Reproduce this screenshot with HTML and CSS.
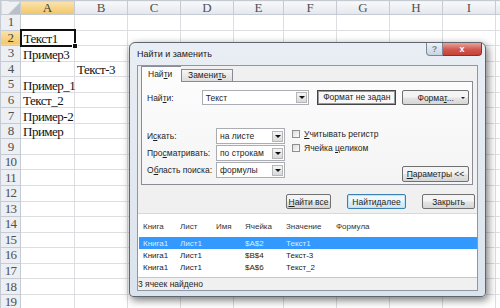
FILE: index.html
```html
<!DOCTYPE html>
<html lang="ru">
<head>
  <meta charset="UTF-8">
  <title>Найти и заменить</title>
  <link rel="stylesheet" href="styles.css">
</head>
<body>
  <!-- лист Excel -->
  <table class="sheet">
    <colgroup>
      <col class="rn"><col class="wa"><col class="w"><col class="w"><col class="w"><col class="we">
      <col class="w"><col class="w"><col class="w"><col class="w"><col class="wj">
    </colgroup>
    <tr class="hdr"><th class="corner"></th><th class="sel">A</th><th>B</th><th>C</th><th>D</th><th>E</th><th>F</th><th>G</th><th>H</th><th>I</th><th></th></tr>
    <tr><th>1</th><td></td><td></td><td></td><td></td><td></td><td></td><td></td><td></td><td></td><td></td></tr>
    <tr><th class="sel">2</th><td class="active">Текст1</td><td></td><td></td><td></td><td></td><td></td><td></td><td></td><td></td><td></td></tr>
    <tr><th>3</th><td>Пример3</td><td></td><td></td><td></td><td></td><td></td><td></td><td></td><td></td><td></td></tr>
    <tr><th>4</th><td></td><td>Текст-3</td><td></td><td></td><td></td><td></td><td></td><td></td><td></td><td></td></tr>
    <tr><th>5</th><td>Пример_1</td><td></td><td></td><td></td><td></td><td></td><td></td><td></td><td></td><td></td></tr>
    <tr><th>6</th><td>Текст_2</td><td></td><td></td><td></td><td></td><td></td><td></td><td></td><td></td><td></td></tr>
    <tr><th>7</th><td>Пример-2</td><td></td><td></td><td></td><td></td><td></td><td></td><td></td><td></td><td></td></tr>
    <tr><th>8</th><td>Пример</td><td></td><td></td><td></td><td></td><td></td><td></td><td></td><td></td><td></td></tr>
    <tr><th>9</th><td></td><td></td><td></td><td></td><td></td><td></td><td></td><td></td><td></td><td></td></tr>
    <tr><th>10</th><td></td><td></td><td></td><td></td><td></td><td></td><td></td><td></td><td></td><td></td></tr>
    <tr><th>11</th><td></td><td></td><td></td><td></td><td></td><td></td><td></td><td></td><td></td><td></td></tr>
    <tr><th>12</th><td></td><td></td><td></td><td></td><td></td><td></td><td></td><td></td><td></td><td></td></tr>
    <tr><th>13</th><td></td><td></td><td></td><td></td><td></td><td></td><td></td><td></td><td></td><td></td></tr>
    <tr><th>14</th><td></td><td></td><td></td><td></td><td></td><td></td><td></td><td></td><td></td><td></td></tr>
    <tr><th>15</th><td></td><td></td><td></td><td></td><td></td><td></td><td></td><td></td><td></td><td></td></tr>
    <tr><th>16</th><td></td><td></td><td></td><td></td><td></td><td></td><td></td><td></td><td></td><td></td></tr>
    <tr><th>17</th><td></td><td></td><td></td><td></td><td></td><td></td><td></td><td></td><td></td><td></td></tr>
    <tr><th>18</th><td></td><td></td><td></td><td></td><td></td><td></td><td></td><td></td><td></td><td></td></tr>
    <tr><th>19</th><td></td><td></td><td></td><td></td><td></td><td></td><td></td><td></td><td></td><td></td></tr>
  </table>

  <!-- окно поиска поверх листа -->
  <div class="dialog">
    <div class="titlebar">
      <span class="title">Найти и заменить</span>
      <div class="caption-btns">
        <span class="cap-help">?</span>
        <span class="cap-close">x</span>
      </div>
    </div>

    <div class="client">
      <div class="tabs">
        <span class="tab active">Най<u>т</u>и</span>
        <span class="tab">Замени<u>т</u>ь</span>
      </div>

      <div class="panel">
        <div class="find-row">
          <span class="lbl">Най<u>т</u>и:</span>
          <div class="combo find-combo"><span class="val">Текст</span><i class="drop"></i></div>
          <div class="fmt-box">Формат не задан</div>
          <div class="btn fmt-btn"><span>Форма<u>т</u>...</span><i class="mini-arrow"></i></div>
        </div>

        <div class="opts">
          <div class="opt-grid">
            <span class="lbl">И<u>с</u>кать:</span>
            <div class="combo"><span class="val">на листе</span><i class="drop"></i></div>
            <span class="lbl">Про<u>с</u>матривать:</span>
            <div class="combo"><span class="val">по строкам</span><i class="drop"></i></div>
            <span class="lbl">О<u>б</u>ласть поиска:</span>
            <div class="combo"><span class="val">формулы</span><i class="drop"></i></div>
          </div>
          <div class="checks">
            <div class="check"><i class="box"></i><span><u>У</u>читывать регистр</span></div>
            <div class="check"><i class="box"></i><span>Ячейка <u>ц</u>еликом</span></div>
          </div>
          <div class="btn params-btn"><u>П</u>араметры &lt;&lt;</div>
        </div>
      </div>

      <div class="actions">
        <div class="btn find-all"><u>Н</u>айти все</div>
        <div class="btn find-next focused">Найти <u>д</u>алее</div>
        <div class="btn close-btn">Закрыть</div>
      </div>

      <div class="results">
        <div class="res-row res-head">
          <span>Книга</span><span>Лист</span><span>Имя</span><span>Ячейка</span><span>Значение</span><span>Формула</span>
        </div>
        <div class="res-row picked">
          <span>Книга1</span><span>Лист1</span><span></span><span>$A$2</span><span>Текст1</span><span></span>
        </div>
        <div class="res-row">
          <span>Книга1</span><span>Лист1</span><span></span><span>$B$4</span><span>Текст-3</span><span></span>
        </div>
        <div class="res-row">
          <span>Книга1</span><span>Лист1</span><span></span><span>$A$6</span><span>Текст_2</span><span></span>
        </div>
      </div>

      <div class="status">3 ячеек найдено</div>
    </div>
  </div>
</body>
</html>
```

FILE: styles.css
```css
body {
  margin: 0;
  width: 500px;
  height: 308px;
  overflow: hidden;
  position: relative;
  background: #fff;
  font-family: 'Liberation Serif', serif;
}

/* ---------- лист ---------- */

.sheet {
  border-collapse: collapse;
  table-layout: fixed;
  width: 522px;
}

.sheet col.rn { width: 20px; }
.sheet col.wa { width: 54px; }
.sheet col.w { width: 53px; }
.sheet col.we { width: 50px; }
.sheet col.wj { width: 27px; }

.sheet tr { height: 15.55px; }
.sheet tr.hdr { height: 14px; }

.sheet td {
  border: 1px solid #dcdee2;
  padding: 0 2px;
  font-size: 13px;
  letter-spacing: -0.5px;
  line-height: 13px;
  color: #111;
  white-space: nowrap;
  overflow: visible;
  vertical-align: bottom;
}

.sheet th {
  border: 1px solid #c6cbd3;
  padding: 0;
  font-weight: normal;
  font-size: 13px;
  line-height: 12px;
  color: #505050;
  background: linear-gradient(#f8f9fb, #e3e7ec);
  text-align: center;
  overflow: hidden;
}

.sheet tr:not(.hdr) th {
  background: #eceff3;
  letter-spacing: -0.8px;
}

.sheet th.sel,
.sheet tr:not(.hdr) th.sel {
  background: linear-gradient(#fbe3ad, #f2c766);
  color: #3c3c3c;
}

.sheet th.corner {
  background: linear-gradient(135deg, #eef0f3 62%, #b9c0ca 62%);
}

.sheet td.active {
  position: relative;
  border: 2px solid #111;
}

.sheet td.active::after {
  content: "";
  position: absolute;
  right: -4px;
  bottom: -4px;
  width: 4px;
  height: 4px;
  background: #111;
  border: 1px solid #fff;
}

/* ---------- окно ---------- */

.dialog {
  position: absolute;
  left: 129px;
  top: 42px;
  width: 357px;
  height: 255px;
  box-sizing: border-box;
  display: flex;
  flex-direction: column;
  padding: 0 7px 5px;
  border: 1px solid #5f6670;
  border-radius: 6px 6px 4px 4px;
  background: linear-gradient(#e9eef4, #dbe3ec);
  box-shadow: 2px 3px 8px rgba(0, 0, 0, 0.55);
  font-family: 'Liberation Sans', sans-serif;
  font-size: 8.5px;
  color: #1e1e1e;
}

.titlebar {
  height: 24px;
  display: flex;
  align-items: flex-start;
}

.title {
  margin-top: 4px;
  font-size: 9px;
  line-height: 14px;
  color: #1a1a1a;
}

.caption-btns {
  margin-left: auto;
  margin-right: -4px;
  display: flex;
}

.cap-help,
.cap-close {
  height: 13px;
  display: flex;
  align-items: center;
  justify-content: center;
  border: 1px solid #7d8794;
  border-top: none;
  box-sizing: border-box;
  font-size: 9px;
  font-weight: bold;
}

.cap-help {
  width: 17px;
  border-radius: 0 0 0 4px;
  background: linear-gradient(#edf1f6, #c9d4e1);
  color: #7b8795;
}

.cap-close {
  width: 39px;
  border-left: none;
  border-color: #8c2f28;
  border-radius: 0 0 4px 0;
  background: linear-gradient(#e6a59c, #d1574c 55%, #c54237);
  color: #fff;
}

.client {
  flex: 1;
  display: flex;
  flex-direction: column;
  background: #f0f0f0;
  border: 1px solid #8e98a4;
}

/* вкладки */

.tabs {
  height: 15px;
  margin-left: 3px;
  display: flex;
  align-items: flex-end;
  position: relative;
  z-index: 1;
}

.tab {
  height: 12px;
  padding: 0 6px;
  box-sizing: border-box;
  border: 1px solid #898c95;
  border-bottom: none;
  background: linear-gradient(#f6f6f6, #dedede);
  line-height: 11px;
}

.tab.active {
  height: 16px;
  width: 40px;
  margin-bottom: -1px;
  background: #fcfcfc;
  border-right: none;
  line-height: 15px;
}

.panel {
  height: 104px;
  margin: 0 4px 0 3px;
  box-sizing: border-box;
  padding: 8px 3px 4px 5px;
  border: 1px solid #898c95;
  background: linear-gradient(#fcfcfc, #f4f4f4);
  display: flex;
  flex-direction: column;
}

.find-row {
  height: 15px;
  display: flex;
  align-items: center;
}

.find-row .lbl { width: 55px; }

.combo {
  height: 15px;
  box-sizing: border-box;
  display: flex;
  align-items: center;
  border: 1px solid #abadb3;
  background: #fff;
}

.combo .val {
  flex: 1;
  padding-left: 3px;
  white-space: nowrap;
}

.combo .drop {
  width: 11px;
  height: 11px;
  margin-right: 1px;
  box-sizing: border-box;
  display: flex;
  align-items: center;
  justify-content: center;
  border: 1px solid #b7b7b7;
  background: linear-gradient(#f6f6f6, #d9d9d9);
}

.combo .drop::before {
  content: "";
  border-left: 3px solid transparent;
  border-right: 3px solid transparent;
  border-top: 3px solid #111;
}

.find-combo { width: 108px; }

.fmt-box {
  width: 79px;
  height: 15px;
  margin-left: 8px;
  box-sizing: border-box;
  border: 1px solid #444;
  box-shadow: inset 0 0 0 1px #9a9a9a;
  background: #f8f8f8;
  text-align: center;
  line-height: 13px;
}

.btn {
  height: 15px;
  box-sizing: border-box;
  display: flex;
  align-items: center;
  justify-content: center;
  border: 1px solid #707070;
  border-radius: 2px;
  background: linear-gradient(#f4f4f4 45%, #e4e4e4 55%, #d6d6d6);
  white-space: nowrap;
}

.fmt-btn {
  width: 67px;
  margin-left: 6px;
  position: relative;
}

.mini-arrow {
  position: absolute;
  right: 3px;
  top: 6px;
  border-left: 2px solid transparent;
  border-right: 2px solid transparent;
  border-top: 2px solid #222;
}

.opts {
  flex: 1;
  margin-top: 23px;
  display: flex;
}

.opt-grid {
  display: grid;
  grid-template-columns: 69px 69px;
  grid-auto-rows: 16px;
  row-gap: 1px;
  align-items: center;
}

.opt-grid .combo { height: 16px; }

.checks {
  margin: 1px 0 0 7px;
  display: flex;
  flex-direction: column;
  gap: 5px;
}

.check {
  display: flex;
  align-items: center;
  gap: 4px;
  height: 9px;
}

.check .box {
  width: 8px;
  height: 8px;
  box-sizing: border-box;
  border: 1px solid #8e8f8f;
  background: linear-gradient(135deg, #dcdcdc, #fcfcfc);
}

.params-btn {
  width: 67px;
  height: 16px;
  margin-left: auto;
  margin-bottom: -2px;
  align-self: flex-end;
}

/* кнопки */

.actions {
  height: 15px;
  margin: 9px 2px 0 0;
  display: flex;
  justify-content: flex-end;
  gap: 16px;
}

.find-all { width: 45px; }
.find-next { width: 59px; }
.close-btn { width: 53px; }

.btn.focused {
  border-color: #3c7fb1;
  box-shadow: inset 0 0 0 1px #bfe4f8;
  background: linear-gradient(#eef7fd 45%, #dcedf8 55%, #cfe6f6);
}

/* результаты */

.results {
  height: 63px;
  margin-top: 4px;
  border-top: 1px solid #d8d8d8;
  background: #fff;
}

.res-row {
  height: 12px;
  padding-left: 5px;
  display: grid;
  grid-template-columns: 37px 36px 29px 41px 50px 1fr;
  align-items: center;
  font-size: 8px;
  color: #222;
  white-space: nowrap;
}

.res-head {
  height: 21px;
  padding-top: 2px;
  color: #333;
}

.res-row.picked {
  margin-left: 1px;
  padding-left: 4px;
  background: #3399ff;
  color: #d9ecff;
}

.status {
  height: 13px;
  box-sizing: border-box;
  border-top: 1px solid #c7c7c7;
  line-height: 12px;
  padding-left: 0;
}
```
